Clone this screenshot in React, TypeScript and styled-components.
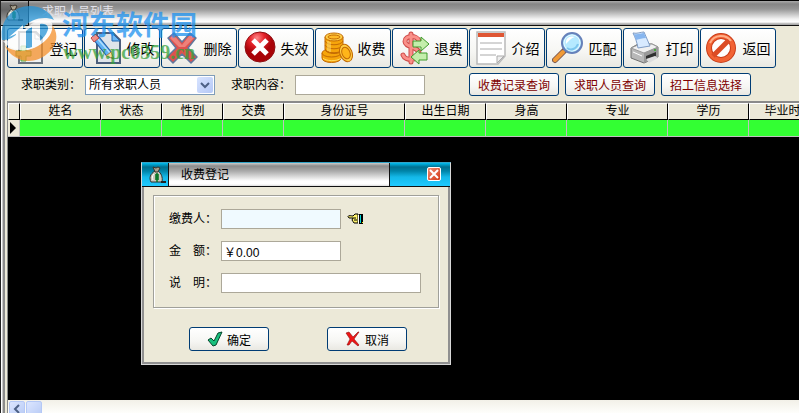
import React from "react";
import styled, { createGlobalStyle } from "styled-components";

const Global = createGlobalStyle`
  * { box-sizing: border-box; }
  body { margin: 0; background: #000; overflow: hidden; }
  body, button, input, select {
    font-family: "Liberation Sans", "Noto Sans CJK SC", sans-serif;
    font-size: 12px;
    color: #000;
  }
  svg { display: block; flex: none; }
`;

const Window = styled.main`
  position: relative;
  display: flex;
  flex-direction: column;
  height: 100vh;
  overflow: hidden;
  border-top: 1px solid #000;
  border-left: 1px solid #222;
  background: #000;
`;

const TitleBar = styled.header`
  display: flex;
  flex: none;
  height: 25px;
  border-bottom: 1px solid #111;
  background: linear-gradient(#aaa 0, #858585 3px, #969696 8px, #f2f2f2 18px, #fff 21px, #aaa 23px);
`;

const TitleIcon = styled.div`
  display: flex;
  align-items: center;
  justify-content: center;
  width: 28px;
  border-right: 1px solid #111;
  background: linear-gradient(#bbb 0, #777 2px, #666 9px, #aaa);
`;

const TitleText = styled.h1`
  margin: 0;
  padding: 3px 0 0 13px;
  font-size: 12px;
  line-height: 16px;
  font-weight: normal;
  color: #e2e2ea;
`;

const Body = styled.div`
  display: flex;
  flex: 1;
  min-height: 0;
`;

const LeftFrame = styled.div`
  flex: none;
  width: 4px;
  background: linear-gradient(to right, #fff 0 1px, #c8c8c8 1px 2px, #8c8c8c 2px 4px);
`;

const Client = styled.div`
  display: flex;
  flex: 1;
  flex-direction: column;
  min-width: 0;
  background: #ece9d8;
`;

const Toolbar = styled.div`
  display: flex;
  flex: none;
  gap: 1px;
  padding: 2px 2px 0;
`;

const XpButton = styled.button`
  display: flex;
  align-items: center;
  justify-content: center;
  padding: 0;
  border: 1px solid #003c74;
  border-radius: 3px;
  background: linear-gradient(#fff, #f6f6f3 60%, #e9e8e2);
  white-space: nowrap;
`;

const ToolButton = styled(XpButton)`
  flex: none;
  gap: 5px;
  width: 76px;
  height: 40px;
  font-size: 14px;
`;

const Filters = styled.div`
  display: flex;
  flex: none;
  align-items: center;
  height: 33px;
  padding: 0 16px;
`;

const Label = styled.label`
  flex: none;
  width: 64px;
  line-height: 18px;
  white-space: pre;
`;

const TextBox = styled.input<{ $w: number; $tint?: boolean }>`
  width: ${(p) => p.$w}px;
  height: 20px;
  padding: 0 2px;
  border: 1px solid #aca899;
  border-radius: 0;
  outline: none;
  background: ${(p) => (p.$tint ? "#f0faff" : "#fff")};
`;

const Combo = styled.span`
  display: flex;
  align-items: center;
  width: 130px;
  height: 20px;
  margin-right: 16px;
  padding-right: 1px;
  border: 1px solid #7f9db9;
  background: #fff;
`;

const Select = styled.select`
  flex: 1;
  min-width: 0;
  height: 18px;
  padding: 0 3px;
  border: 0;
  outline: none;
  appearance: none;
  background: transparent;
`;

const ComboArrow = styled.span`
  display: flex;
  align-items: center;
  justify-content: center;
  width: 16px;
  height: 16px;
  border-radius: 2px;
  background: linear-gradient(135deg, #d8e4ff, #b4c8f6);
`;

const QueryGroup = styled.div`
  display: flex;
  gap: 6px;
  margin-left: 44px;
`;

const QueryButton = styled(XpButton)`
  width: 90px;
  height: 23px;
  color: #800000;
`;

const Grid = styled.section`
  display: flex;
  flex: 1;
  flex-direction: column;
  min-height: 0;
  margin-left: 2px;
  overflow: hidden;
  border-top: 2px solid #8a8a8a;
  border-left: 1px solid #8a8a8a;
  background: #000;
`;

const Table = styled.table`
  flex: none;
  width: 820px;
  table-layout: fixed;
  border-collapse: separate;
  border-spacing: 0;

  th {
    height: 17px;
    padding: 0;
    border: 1px solid;
    border-color: #fff #000 #000 #fff;
    background: #ece9d8;
    font-weight: normal;
    line-height: 15px;
    white-space: nowrap;
  }
  td {
    height: 17px;
    padding: 0;
    border-right: 1px solid #c0c0c0;
    border-bottom: 1px solid #c0c0c0;
    background: #3f3;
  }
  td:first-child {
    background: #ece9d8;
  }
`;

const Scrollbar = styled.div`
  display: flex;
  gap: 1px;
  flex: none;
  height: 13px;
  margin-top: auto;
  padding: 1px 1px 0;
  overflow: hidden;
  background: linear-gradient(#f2f0e8, #fefefb);
`;

const ScrollButton = styled.button`
  display: flex;
  align-items: center;
  justify-content: center;
  width: 16px;
  height: 16px;
  padding: 0;
  border: 1px solid #b4c8f6;
  border-radius: 2px;
  background: linear-gradient(135deg, #dce6ff, #b7caf5);
`;

const Dialog = styled.section`
  position: absolute;
  top: 161px;
  left: 140px;
  width: 310px;
  border: 1px solid #d8d8d8;
  border-top-color: #32a4c8;
  background: #ece9d8;
`;

const DialogTitle = styled.header`
  display: flex;
  height: 24px;
  border-bottom: 1px solid #111;
  background: linear-gradient(#00bdf0 0, #007090 4px, #0084a8 8px, #14b8e8 14px, #20caff);
`;

const DialogIcon = styled.div`
  display: flex;
  align-items: center;
  justify-content: center;
  width: 27px;
  padding-left: 4px;
  border-right: 1px solid #111;
`;

const DialogName = styled.h2`
  flex: none;
  width: 221px;
  margin: 0;
  padding-left: 12px;
  border-right: 1px solid #111;
  background: linear-gradient(#ccc 0, #8c8c8c 3px, #aaa 8px, #fff 18px, #fff 21px, #ddd);
  font-size: 12px;
  font-weight: normal;
  line-height: 24px;
`;

const CloseButton = styled.button`
  display: flex;
  align-items: center;
  justify-content: center;
  width: 14px;
  height: 14px;
  margin: 4px 9px 0 auto;
  padding: 0;
  border: 1px solid #fff;
  border-radius: 2px;
  background: linear-gradient(135deg, #f08a70, #d33a18);
`;

const DialogBody = styled.form`
  padding: 8px 9px 11px;
  border: solid #909090;
  border-width: 0 2px 2px;
`;

const Fields = styled.fieldset`
  display: grid;
  gap: 12px;
  margin: 0;
  padding: 13px 15px 14px;
  border: 1px solid #a0a09a;
  box-shadow: 1px 1px #fff, inset 1px 1px #fff;
`;

const Field = styled.div`
  display: grid;
  grid-template-columns: 52px auto 1fr;
  align-items: center;
`;

const HandButton = styled.button`
  margin-left: 6px;
  padding: 0;
  border: 0;
  background: none;
  justify-self: start;
`;

const Actions = styled.div`
  display: flex;
  justify-content: space-between;
  padding: 19px 32px 0 36px;
`;

const ActionButton = styled(XpButton)`
  gap: 4px;
  width: 80px;
  height: 24px;
`;

const Watermark = styled.aside`
  position: absolute;
  top: 5px;
  left: 0;
  display: flex;
  gap: 3px;
  pointer-events: none;
  opacity: 0.74;
`;

const MarkText = styled.div`
  padding-top: 3px;
`;

const MarkName = styled.div`
  font-family: "Noto Sans CJK SC", sans-serif;
  font-size: 27px;
  line-height: 30px;
  font-weight: bold;
  color: #1b90ee;
`;

const MarkUrl = styled.div`
  padding: 2px 0 0 1px;
  font-family: "Liberation Serif", serif;
  font-size: 20px;
  line-height: 22px;
  font-weight: bold;
  color: #35a13a;
`;

const Icon = ({ children }: { children: React.ReactNode }) => (
  <svg width="32" height="34" viewBox="0 0 32 34" fill="none" aria-hidden="true">{children}</svg>
);

const AddIcon = () => (
  <Icon>
    <path d="M6 1h17l6 6v25H6z" fill="#eef1f4" stroke="#6d7680" strokeWidth="2" />
    <path d="M22 2v6h6z" fill="#fff" stroke="#9ba1a8" />
    <path d="M8 15h5v5h5v5h-5v5H8v-5H3v-5h5z" fill="#b4e094" stroke="#5ca642" />
  </Icon>
);

const EditIcon = () => (
  <Icon>
    <path d="M7 2h16l7 7v23H7z" fill="#dfe4ea" stroke="#4d5f7c" strokeWidth="2" />
    <path d="M22 2v8h8z" fill="#6db8f4" stroke="#2368b4" />
    <path d="M6 7L19 23" stroke="#2560a8" strokeWidth="7" />
    <path d="M6 7L19 23" stroke="#5fb2f5" strokeWidth="5" />
    <path d="M7 7L20 22" stroke="#b5defc" strokeWidth="1.5" />
    <path d="M1 7l4-4 4 4-5 4z" fill="#f0908a" stroke="#b84d4a" strokeLinejoin="round" />
    <path d="M16 25l5-4 3 7z" fill="#f8dba2" stroke="#a8803a" />
    <path d="M22 26l2 2-3-1z" fill="#333" />
  </Icon>
);

const DeleteIcon = () => (
  <Icon>
    <path d="M1 7l6-5 8 9 8-9 6 5-8 10 9 9-6 6-9-9-9 9-6-6 9-9z" fill="#df514e" stroke="#60799e" strokeWidth="1.5" strokeLinejoin="round" />
    <path d="M3 7l4-3 8 10 8-10 4 3-9 9h-6z" fill="#f49b92" opacity=".65" />
  </Icon>
);

const VoidIcon = () => (
  <Icon>
    <defs>
      <radialGradient id="void" cx=".4" cy=".2"><stop stopColor="#f88" /><stop offset=".5" stopColor="#e5232a" /><stop offset="1" stopColor="#a90308" /></radialGradient>
    </defs>
    <circle cx="16" cy="16" r="15" fill="url(#void)" stroke="#8f1114" />
    <path d="M9 9l14 14M23 9L9 23" stroke="#fff" strokeWidth="5" />
  </Icon>
);

const CoinsIcon = () => (
  <Icon>
    <g fill="#f6a50b" stroke="#c36a04">
      <path d="M1 22v5c0 6 19 6 19 0v-5z" />
      <ellipse cx="10.500" cy="22" rx="9.500" ry="4" />
      <path d="M2 27c2 3 14 4 18 0" fill="none" stroke="#ffdc62" />
      <path d="M4 6v12c0 6 18 6 18 0V6z" />
      <path d="M4 10c2 5 16 5 18 0M4 14c2 5 16 5 18 0M4 18c2 5 16 5 18 0" fill="none" />
      <path d="M7 10v10M9 11v10" fill="none" stroke="#ffe07a" />
      <ellipse cx="13" cy="6" rx="9" ry="4" fill="#ffd04a" />
      <ellipse cx="13" cy="6" rx="6" ry="2" fill="#ffba27" />
      <ellipse cx="25" cy="22" rx="6" ry="9" fill="#ffcd42" transform="rotate(-22 25 22)" />
      <ellipse cx="25" cy="22" rx="4" ry="6" fill="#ffb519" transform="rotate(-22 25 22)" />
    </g>
  </Icon>
);

const RefundIcon = () => (
  <Icon>
    <g strokeLinecap="round">
      <path d="M21 10C19 4 7 4 7 10.500c0 6 14 5 14 12C21 30 7 30 5 24M13 3v28" stroke="#cd4a48" strokeWidth="5" />
      <path d="M21 10C19 4 7 4 7 10.500c0 6 14 5 14 12C21 30 7 30 5 24M13 3v28" stroke="#fa9089" strokeWidth="3" />
    </g>
    <path d="M15 10h8V6l8 7-8 7v-4h-8zM29 22h-8v-3l-8 7 8 7v-4h8z" fill="#c4eeab" stroke="#3f9a2a" />
  </Icon>
);

const IntroIcon = () => (
  <Icon>
    <path d="M2 1h28v24l-7 8H2z" fill="#fff" stroke="#b9b9b9" strokeWidth="1.500" />
    <path d="M3 4h26" stroke="#df5634" strokeWidth="4" />
    <path d="M5 12h22M5 18h22M5 24h16" stroke="#aaa" />
    <path d="M22 32v-7h7z" fill="#eee" stroke="#aaa" />
  </Icon>
);

const MatchIcon = () => (
  <Icon>
    <path d="M13 19L3 29" stroke="#7c5a51" strokeWidth="6" strokeLinecap="round" />
    <path d="M11 21L3 29" stroke="#f09a37" strokeWidth="4" strokeLinecap="round" />
    <circle cx="20" cy="12" r="10" fill="#a8e2fb" stroke="#6681ba" strokeWidth="2" />
    <circle cx="20" cy="12" r="8" fill="#b5e9ff" stroke="#eaf9ff" />
    <path d="M14 13c-1-6 4-9 9-7-4 1-6 4-9 7" fill="#fff" />
    <path d="M15 17c4 3 9 1 11-4" stroke="#7cc6ee" strokeWidth="2" />
  </Icon>
);

const PrintIcon = () => (
  <Icon>
    <path d="M2 17l7-4h14l6 3v10l-14 6L2 27z" fill="#b8b8b8" stroke="#6f6f6f" />
    <path d="M2 17l13 5 14-6-6-3-14 1z" fill="#f0f0f0" stroke="#999" />
    <path d="M4 2c4 1 8-1 11-1l6 14-12 2C8 11 6 6 4 2z" fill="#d8eaff" stroke="#7f9cc5" />
    <path d="M5 3c4 1 7-1 10-1l2 5c-4 0-6 1-10 2z" fill="#87b6ef" />
    <path d="M15 22v10l14-6V16z" fill="#999" />
    <path d="M17 25l10-4v4l-10 4z" fill="#303030" />
    <path d="M17 28l9-3 3 2-9 5z" fill="#ddd" />
    <path d="M4 21l9 4" stroke="#fff" />
    <path d="M25 19h2" stroke="#4aae42" strokeWidth="2" />
  </Icon>
);

const BackIcon = () => (
  <Icon>
    <circle cx="15" cy="17" r="12" fill="#fff" stroke="#c83c18" strokeWidth="6" />
    <circle cx="15" cy="17" r="12" stroke="#f26334" strokeWidth="4" />
    <path d="M7 25L23 9" stroke="#dc4b24" strokeWidth="5" />
    <path d="M4 12C8 3 20 3 25 10" stroke="#ffae87" strokeWidth="2" />
  </Icon>
);

const MoneyBag = () => (
  <svg width="17" height="18" viewBox="0 0 17 18" aria-hidden="true">
    <path d="M6 5C1 8 0 12 2 16h11c1-5-1-9-4-11z" fill="#c9c9bd" stroke="#302f2a" />
    <path d="M4 1l3 1 2-1 2 1-2 4H6z" fill="#aaa28e" stroke="#39342c" />
    <path d="M5 8c-2 2-2 4-1 6" stroke="#fff" fill="none" />
    <path d="M8 7v9M6 9h4M6 11h4M6 13h4" stroke="#007421" strokeWidth="1.5" fill="none" />
    <path d="M12 16h5" stroke="#222" strokeWidth="2" />
  </svg>
);

const Chevron = ({ left }: { left?: boolean }) => (
  <svg width="10" height="10" viewBox="0 0 10 10" aria-hidden="true">
    <path d={left ? "M7 1L3 5l4 4" : "M1 3l4 4 4-4"} fill="none" stroke="#4d6185" strokeWidth="2" />
  </svg>
);

const HandIcon = () => (
  <svg width="17" height="12" viewBox="0 0 17 12" aria-hidden="true">
    <path d="M1 3.500C1 2 5 3 6 3l2-2h3v9H7L6 8.500 5 7l1-2H2z" fill="#fff36b" stroke="#000" />
    <path d="M6 5h3M7 7h3" stroke="#000" />
    <path d="M11 2h1v8h-1z" fill="#fff" />
    <path d="M12 1h4v10h-4z" fill="#000" />
    <path d="M13 2h1v8h-1z" fill="#00d8d8" />
    <path d="M15 9h1v1h-1z" fill="#ffe800" />
  </svg>
);

const CheckIcon = () => (
  <svg width="16" height="16" viewBox="0 0 16 16" aria-hidden="true">
    <path d="M1 9l3-2 3 3 4-8 4-1-6 13-3 1z" fill="#18bf7d" stroke="#06452c" strokeLinejoin="round" />
  </svg>
);

const CrossIcon = () => (
  <svg width="16" height="16" viewBox="0 0 16 16" aria-hidden="true">
    <path d="M1 2l3-1 4 5 5-5h1L9 8l5 6-1 1-6-5-3 4H2l3-6z" fill="#ef1515" stroke="#8d0b0b" strokeWidth=".6" />
  </svg>
);

const WatermarkLogo = () => (
  <svg width="58" height="56" viewBox="0 0 58 56" aria-hidden="true">
    <path d="M1 34C-2 14 12 0 29 0c11 0 20 6 24 14-9-4-22-2-30 7C17 28 9 35 1 34z" fill="#2493d6" />
    <path d="M50 18c9 9 6 22-4 30-14 12-34 8-42-8 9 7 24 6 33-1 9-6 14-13 13-21z" fill="#f58f28" />
    <path d="M2 35c7 0 15-4 22-12 9-9 20-11 27-6 2 9-4 17-14 23C26 47 9 45 2 35z" fill="#fff" />
    <path d="M8 31l14-12v24h-7V28z" fill="#fff" />
    <path d="M25 25c3-3 5-3 6-4v20c-2 1-4 1-6 1z" fill="#2493d6" />
    <path d="M39 18c7-1 10 3 7 8-1 3-4 6-7 9z" fill="#2493d6" />
  </svg>
);

const tools = [
  { name: "登记", icon: AddIcon },
  { name: "修改", icon: EditIcon },
  { name: "删除", icon: DeleteIcon },
  { name: "失效", icon: VoidIcon },
  { name: "收费", icon: CoinsIcon },
  { name: "退费", icon: RefundIcon },
  { name: "介绍", icon: IntroIcon },
  { name: "匹配", icon: MatchIcon },
  { name: "打印", icon: PrintIcon },
  { name: "返回", icon: BackIcon },
];

const columns = [
  { name: "姓名", width: 81 },
  { name: "状态", width: 61 },
  { name: "性别", width: 61 },
  { name: "交费", width: 61 },
  { name: "身份证号", width: 121 },
  { name: "出生日期", width: 81 },
  { name: "身高", width: 81 },
  { name: "专业", width: 101 },
  { name: "学历", width: 81 },
  { name: "毕业时间", width: 79 },
];

export default function App() {
  return (
    <>
      <Global />
      <Window>
        <TitleBar>
          <TitleIcon><MoneyBag /></TitleIcon>
          <TitleText>求职人员列表</TitleText>
        </TitleBar>
        <Body>
          <LeftFrame />
          <Client>
            <Toolbar role="toolbar">
              {tools.map(({ name, icon: ToolIcon }) => (
                <ToolButton key={name} type="button"><ToolIcon />{name}</ToolButton>
              ))}
            </Toolbar>
            <Filters>
              <Label htmlFor="category">求职类别：</Label>
              <Combo>
                <Select id="category"><option>所有求职人员</option></Select>
                <ComboArrow><Chevron /></ComboArrow>
              </Combo>
              <Label htmlFor="keyword">求职内容：</Label>
              <TextBox id="keyword" $w={130} />
              <QueryGroup>
                <QueryButton type="button">收费记录查询</QueryButton>
                <QueryButton type="button">求职人员查询</QueryButton>
                <QueryButton type="button">招工信息选择</QueryButton>
              </QueryGroup>
            </Filters>
            <Grid>
              <Table>
                <colgroup>
                  <col width="12" />
                  {columns.map((c) => <col key={c.name} width={c.width} />)}
                </colgroup>
                <thead>
                  <tr><th />{columns.map((c) => <th key={c.name} scope="col">{c.name}</th>)}</tr>
                </thead>
                <tbody>
                  <tr>
                    <td>
                      <svg width="9" height="12" viewBox="0 0 9 12" aria-hidden="true"><path d="M2 0v12l6-6z" /></svg>
                    </td>
                    {columns.map((c) => <td key={c.name} />)}
                  </tr>
                </tbody>
              </Table>
              <Scrollbar>
                <ScrollButton type="button" aria-label="向左滚动"><Chevron left /></ScrollButton>
                <ScrollButton type="button" aria-label="滚动滑块" />
              </Scrollbar>
            </Grid>
          </Client>
        </Body>

        <Dialog role="dialog" aria-labelledby="dialog-title">
          <DialogTitle>
            <DialogIcon><MoneyBag /></DialogIcon>
            <DialogName id="dialog-title">收费登记</DialogName>
            <CloseButton type="button" aria-label="关闭">
              <svg width="10" height="10" viewBox="0 0 10 10" aria-hidden="true"><path d="M1 1l8 8M9 1L1 9" stroke="#fff" strokeWidth="2" /></svg>
            </CloseButton>
          </DialogTitle>
          <DialogBody onSubmit={(e) => e.preventDefault()}>
            <Fields>
              <Field>
                <Label htmlFor="payer">缴费人：</Label>
                <TextBox id="payer" $w={120} $tint />
                <HandButton type="button" aria-label="选择缴费人"><HandIcon /></HandButton>
              </Field>
              <Field>
                <Label htmlFor="amount">金　额：</Label>
                <TextBox id="amount" $w={120} defaultValue="￥0.00" />
              </Field>
              <Field>
                <Label htmlFor="note">说　明：</Label>
                <TextBox id="note" $w={200} />
              </Field>
            </Fields>
            <Actions>
              <ActionButton type="submit"><CheckIcon />确定</ActionButton>
              <ActionButton type="button"><CrossIcon />取消</ActionButton>
            </Actions>
          </DialogBody>
        </Dialog>

        <Watermark>
          <WatermarkLogo />
          <MarkText>
            <MarkName>河东软件园</MarkName>
            <MarkUrl>www.pc0359.cn</MarkUrl>
          </MarkText>
        </Watermark>
      </Window>
    </>
  );
}
